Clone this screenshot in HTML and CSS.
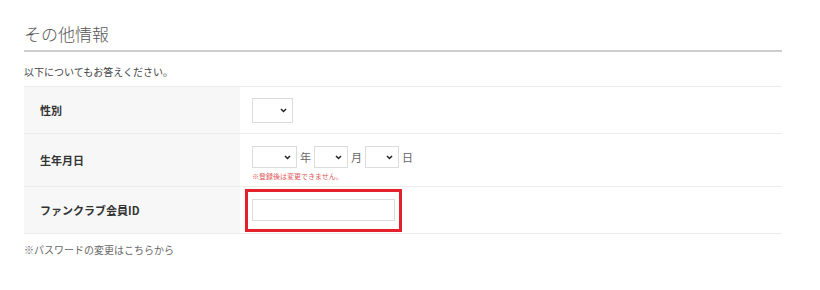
FILE: index.html
```html
<!DOCTYPE html>
<html lang="ja">
<head>
<meta charset="utf-8">
<title>その他情報</title>
<link rel="stylesheet" href="styles.css">
</head>
<body>
<section class="section">
  <h2 class="section-title">その他情報</h2>
  <p class="intro">以下についてもお答えください。</p>
  <div class="form-table">
    <div class="row row-gender">
      <div class="label">性別</div>
      <div class="value">
        <select class="sel sel-gender"><option></option></select>
      </div>
    </div>
    <div class="row row-birth">
      <div class="label">生年月日</div>
      <div class="value value-birth">
        <div class="date-line">
          <select class="sel sel-year"><option></option></select><span class="unit">年</span>
          <select class="sel sel-small"><option></option></select><span class="unit">月</span>
          <select class="sel sel-small"><option></option></select><span class="unit">日</span>
        </div>
        <p class="note">※登録後は変更できません。</p>
      </div>
    </div>
    <div class="row row-id">
      <div class="label">ファンクラブ会員ID</div>
      <div class="value">
        <span class="highlight"><input class="text-input" type="text"></span>
      </div>
    </div>
  </div>
  <p class="footer-note">※パスワードの変更はこちらから</p>
</section>
</body>
</html>
```

FILE: styles.css
```css
html, body {
  margin: 0;
  padding: 0;
  background: #ffffff;
}

body {
  font-family: "Noto Sans CJK JP", "Noto Sans", sans-serif;
  color: #444;
}

.section {
  width: 758px;
  margin-left: 24px;
  padding-top: 22px;
}

.section-title {
  margin: 0;
  font-size: 17px;
  font-weight: 300;
  line-height: 24px;
  color: #555;
  padding-bottom: 4px;
  border-bottom: 2px solid #cdcdcd;
}

.intro {
  margin: 12px 0 6px;
  font-size: 10px;
  line-height: 16px;
  color: #444;
}

.form-table {
  border-top: 1px solid #ececec;
}

.row {
  display: grid;
  grid-template-columns: 216px 1fr;
  border-bottom: 1px solid #ececec;
}

.row-gender, .row-id {
  height: 46px;
}

.row-birth {
  height: 52px;
}

.label {
  background: #f7f7f7;
  padding-left: 16px;
  display: flex;
  align-items: center;
  font-size: 11px;
  font-weight: 700;
  color: #333;
}

.value {
  padding-left: 12px;
  display: flex;
  align-items: center;
}

.value-birth {
  flex-direction: column;
  align-items: flex-start;
  justify-content: flex-start;
  padding-top: 12px;
}

.date-line {
  display: flex;
  align-items: center;
}

.sel {
  appearance: none;
  -webkit-appearance: none;
  margin: 0;
  border: 1px solid #dcdcdc;
  border-radius: 0;
  background-color: #fff;
  background-image: url("data:image/svg+xml,%3Csvg xmlns='http://www.w3.org/2000/svg' width='8' height='6' viewBox='0 0 8 6'%3E%3Cpath d='M1 1.2 L4 4.2 L7 1.2' fill='none' stroke='%23222' stroke-width='1.8'/%3E%3C/svg%3E");
  background-repeat: no-repeat;
  background-position: right 5px center;
  background-size: 7px 5px;
  font-family: inherit;
  font-size: 11px;
  box-sizing: border-box;
  padding: 0;
}

.sel-gender {
  width: 41px;
  height: 25px;
}

.sel-year {
  width: 45px;
  height: 22px;
}

.sel-small {
  width: 34px;
  height: 22px;
}

.unit {
  font-size: 11px;
  color: #666;
  margin: 0 3px 0 3px;
  line-height: 22px;
}

.note {
  margin: 3px 0 0;
  font-size: 7px;
  line-height: 10px;
  color: #e05a5a;
}

.highlight {
  position: relative;
  display: inline-block;
  line-height: 0;
}

.highlight::after {
  content: "";
  position: absolute;
  left: -7px;
  right: -7px;
  top: -10px;
  bottom: -11px;
  border: 3px solid #e4222d;
  pointer-events: none;
}

.text-input {
  width: 143px;
  height: 22px;
  box-sizing: border-box;
  margin: 0;
  border: 1px solid #dcdcdc;
  border-radius: 0;
  background: #fff;
  padding: 0 4px;
  font-family: inherit;
}

.footer-note {
  margin: 8px 0 0;
  font-size: 10px;
  line-height: 16px;
  color: #666;
}
```
